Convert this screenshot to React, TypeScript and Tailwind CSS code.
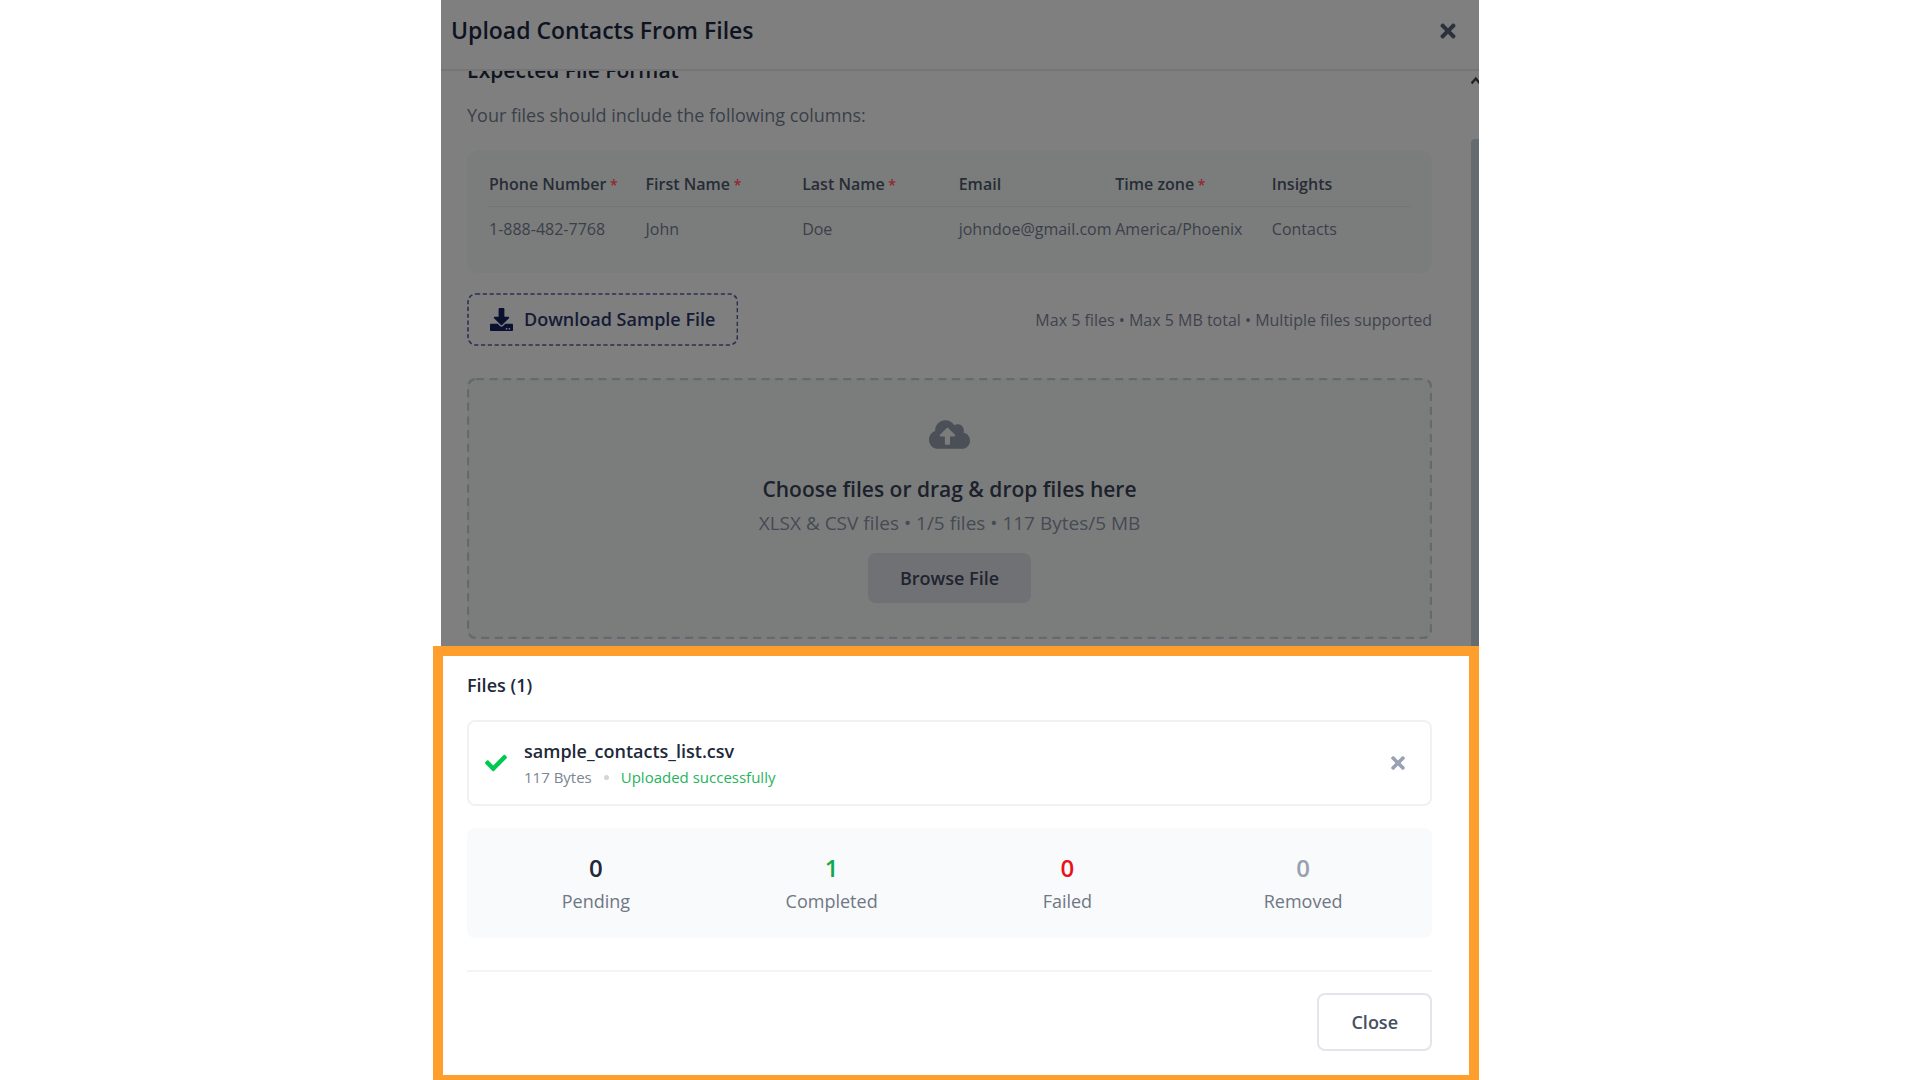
import React from "react";
import {
  FaCheck,
  FaCloudUploadAlt,
  FaDownload,
  FaTimes,
} from "react-icons/fa";

const columns = [
  { label: "Phone Number", required: true, value: "1-888-482-7768" },
  { label: "First Name", required: true, value: "John" },
  { label: "Last Name", required: true, value: "Doe" },
  { label: "Email", required: false, value: "johndoe@gmail.com" },
  { label: "Time zone", required: true, value: "America/Phoenix" },
  { label: "Insights", required: false, value: "Contacts" },
];

const stats = [
  { label: "Pending", value: 0, color: "text-[#1e2939]" },
  { label: "Completed", value: 1, color: "text-[#0fa84a]" },
  { label: "Failed", value: 0, color: "text-[#e7121b]" },
  { label: "Removed", value: 0, color: "text-[#99a1af]" },
];

// dashed outline with longer dashes than the css border gives
const DashedOutline = ({
  className,
  dash,
  strokeWidth,
}: {
  className: string;
  dash: string;
  strokeWidth: number;
}) => {
  return (
    <svg
      aria-hidden="true"
      className={`pointer-events-none absolute inset-0 h-full w-full ${className}`}
      fill="none"
    >
      <rect
        x="1"
        y="1"
        rx="8"
        className="h-[calc(100%-2px)] w-[calc(100%-2px)]"
        stroke="currentColor"
        strokeWidth={strokeWidth}
        strokeDasharray={dash}
      />
    </svg>
  );
};

const FormatTable = () => {
  return (
    <div className="mt-[21px] rounded-xl bg-[#7b7d7c] p-[22px]">
      <table className="w-full table-fixed text-left text-base leading-6 whitespace-nowrap">
        <thead>
          <tr className="border-b border-[#737475]">
            {columns.map((col) => (
              <th
                key={col.label}
                className="w-[17%] pb-2.5 font-semibold text-[#272c37] last:w-[15%]"
              >
                {col.label}
                {col.required && (
                  <span className="text-sm text-[#93272e]"> *</span>
                )}
              </th>
            ))}
          </tr>
        </thead>
        <tbody>
          <tr>
            {columns.map((col) => (
              <td key={col.label} className="py-2.5 text-[#3a3f4a]">
                {col.value}
              </td>
            ))}
          </tr>
        </tbody>
      </table>
    </div>
  );
};

const DropZone = () => {
  return (
    <div className="relative mt-8 flex flex-col items-center rounded-lg bg-[#7b7d7c] pt-10 pb-9">
      <DashedOutline
        className="text-[#65696e]"
        dash="8 5.6"
        strokeWidth={2.4}
      />
      <FaCloudUploadAlt className="h-[33px] w-[41px] text-[#4b5058]" />
      <p className="mt-6 text-[21px] leading-7 font-semibold text-[#1c212c]">
        Choose files or drag &amp; drop files here
      </p>
      <p className="mt-1.5 text-[19px] leading-7 text-[#464a54]">
        XLSX &amp; CSV files • 1/5 files • 117 Bytes/5 MB
      </p>
      <button
        type="button"
        className="mt-4 rounded-lg bg-[#707174] px-8 py-[11px] text-lg leading-7 font-semibold text-[#1f242f]"
      >
        Browse File
      </button>
    </div>
  );
};

const FilesPanel = () => {
  return (
    <section className="-ml-2 border-10 border-b-[5px] border-[#fd9e2d] bg-white pt-[15px] pr-[37px] pb-6 pl-6">
      <h3 className="text-lg leading-7 font-semibold text-[#1e2939]">
        Files (1)
      </h3>
      <div className="mt-[21px] flex items-center rounded-lg border-2 border-[#f0f1f3] py-[15px] pr-[22px] pl-4">
        <FaCheck className="size-[22px] text-[#00c951]" />
        <div className="ml-[17px] flex-1">
          <div className="text-lg leading-7 font-semibold text-[#1e2939]">
            sample_contacts_list.csv
          </div>
          <div className="flex items-center text-[15px] leading-6">
            <span className="text-[#7d8492]">117 Bytes</span>
            <span className="mx-3 size-[5px] rounded-full bg-[#d1d5dc]" />
            <span className="font-medium text-[#27b35c]">
              Uploaded successfully
            </span>
          </div>
        </div>
        <button type="button" aria-label="Remove file">
          <FaTimes className="size-5 text-[#99a1b2]" />
        </button>
      </div>
      <div className="mt-[22px] grid grid-cols-4 gap-[22px] rounded-lg bg-[#f9fafc] p-[22px] text-center">
        {stats.map((stat) => (
          <div key={stat.label}>
            <div className={`text-2xl leading-9 font-semibold ${stat.color}`}>
              {stat.value}
            </div>
            <div className="text-lg leading-[30px] text-[#6f7784]">
              {stat.label}
            </div>
          </div>
        ))}
      </div>
      <div className="mt-8 flex justify-end border-t-2 border-[#f3f4f5] pt-[21px]">
        <button
          type="button"
          className="rounded-lg border-2 border-[#e3e5ea] bg-white px-8 py-[13px] text-lg leading-7 font-semibold text-[#465060]"
        >
          Close
        </button>
      </div>
    </section>
  );
};

const App = () => {
  return (
    <div className="min-h-screen bg-white font-['Open_Sans','Noto_Sans',sans-serif]">
      <main className="mx-auto w-full max-w-[1038px]">
        <div className="bg-[#7f7f7f]">
          <header className="flex h-[71px] items-center justify-between border-b-2 border-[#757576] pr-5 pb-2 pl-2.5">
            <h2 className="text-[23px] font-semibold text-[#0e131f]">
              Upload Contacts From Files
            </h2>
            <button type="button" aria-label="Close dialog">
              <FaTimes className="size-[22px] text-[#2b323d]" />
            </button>
          </header>
          <div className="flex overflow-hidden">
            <div className="min-w-0 flex-1 pr-[39px] pb-[7px] pl-[26px]">
              {/* scrolled partly under the header */}
              <h3 className="-mt-4 text-[21px] leading-[30px] font-semibold text-[#10141f]">
                Expected File Format
              </h3>
              <p className="mt-4 text-lg leading-7 text-[#3a3f49]">
                Your files should include the following columns:
              </p>
              <FormatTable />
              <div className="mt-5 flex items-center justify-between">
                <button
                  type="button"
                  className="relative flex items-center gap-[11px] px-[23px] py-3 text-lg leading-[29px] font-semibold text-[#151b35]"
                >
                  <DashedOutline
                    className="text-[#2b3050]"
                    dash="4.2 2.6"
                    strokeWidth={1.6}
                  />
                  <FaDownload className="size-[23px] text-[#0a1030]" />
                  Download Sample File
                </button>
                <p className="text-base text-[#3f434e]">
                  Max 5 files • Max 5 MB total • Multiple files supported
                </p>
              </div>
              <DropZone />
            </div>
            {/* scroll bar of the dialog body */}
            <div className="flex w-2 flex-col" aria-hidden="true">
              <svg
                viewBox="0 0 8 10"
                className="mt-1 h-2.5 w-2"
                fill="none"
                stroke="#222"
                strokeWidth="2.4"
              >
                <path d="M0.5 8.5 L4.8 3.5 L9 8.5" />
              </svg>
              <div className="mt-[54px] flex-1 rounded-tl bg-[#656b6f]" />
            </div>
          </div>
        </div>
        <FilesPanel />
      </main>
    </div>
  );
};

export default App;
